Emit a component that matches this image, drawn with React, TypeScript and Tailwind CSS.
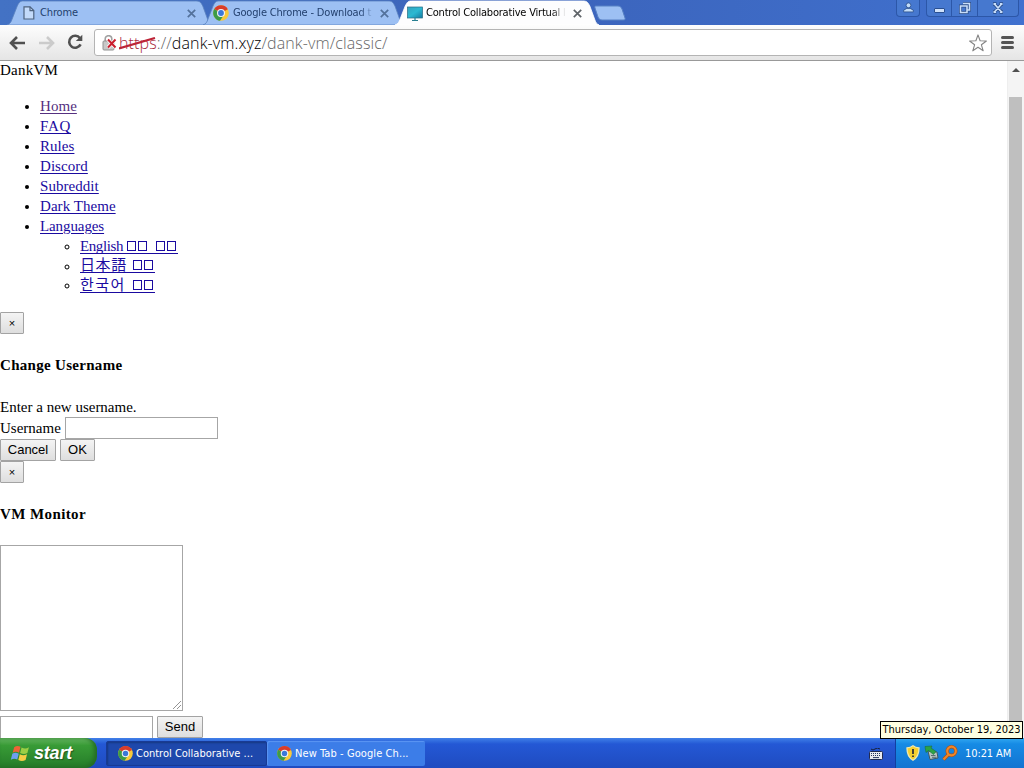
import type { ReactNode } from "react";
import clsx from "clsx";

const links = ["Home", "FAQ", "Rules", "Discord", "Subreddit", "Dark Theme"];

const languages = [
  { name: "English", flags: 2, label: "w-[46px] leading-[21px] tracking-[-0.4px]", row: "h-[20px]", height: "h-[18px]" },
  { name: "日本語", flags: 1, label: "w-[52px] leading-[19px] tracking-[0.6px]", row: "h-[19px]", height: "h-[17px]" },
  { name: "한국어", flags: 1, label: "w-[52px] leading-[20px] tracking-[1.4px]", row: "h-[20px]", height: "h-[18px]" },
];

function ChromeLogo({ className }: { className?: string }) {
  return (
    <svg viewBox="0 0 16 16" className={clsx("shrink-0", className)}>
      <circle cx="8" cy="8" r="7.8" fill="#f9c93a" />
      <path d="M8 8 L1.2 4.1 A7.8 7.8 0 0 1 14.9 4.3 Z" fill="#d93c2c" />
      <path d="M8 8 L1.2 4.1 A7.8 7.8 0 0 0 7 15.75 L11 9.7 Z" fill="#3d9b48" />
      <circle cx="8" cy="8" r="4" fill="#f4f4f4" />
      <circle cx="8" cy="8" r="2.9" fill="#3b78d8" />
    </svg>
  );
}

function PageIcon() {
  return (
    <svg viewBox="0 0 12 14" className="h-3.5 w-3 shrink-0" fill="#c3dafa" stroke="#4e637f" strokeWidth="1.2">
      <path d="M1 0.8 H7 L10.8 4.6 V13 H1 Z" />
      <path d="M7 0.8 V4.6 H10.8" fill="none" />
    </svg>
  );
}

function MonitorIcon() {
  return (
    <svg viewBox="0 0 16 16" className="mt-px h-4 w-4 shrink-0">
      <defs>
        <linearGradient id="screen" x1="0" y1="0" x2="1" y2="1">
          <stop offset="0" stopColor="#35a2bd" />
          <stop offset="0.5" stopColor="#2bb9d2" />
          <stop offset="1" stopColor="#157aa0" />
        </linearGradient>
      </defs>
      <rect x="0.5" y="1" width="15" height="11" fill="url(#screen)" stroke="#286b82" strokeWidth="0.7" />
      <path d="M8 12 V14.5 M5 14.5 H11" stroke="#287f91" strokeWidth="1.2" />
    </svg>
  );
}

function Tab({
  active,
  icon,
  title,
  className,
}: {
  active?: boolean;
  icon: ReactNode;
  title: ReactNode;
  className: string;
}) {
  return (
    <div className={clsx("relative isolate flex h-[25px] shrink-0 items-center pt-px", className)}>
      <svg
        viewBox="0 0 200 25"
        preserveAspectRatio="none"
        className="absolute inset-0 -z-10 h-full w-full"
      >
        <path
          d="M0 25 C3 24 4 22 5 19 L10 6 C12 2 13 1 16 1 H184 C188 1 189 2 191 6 L196 20 C197 23 198 24 200 25 Z"
          fill={active ? "#fdfdfe" : "#9dc0f3"}
          stroke={active ? "#ffffff" : "#5a82bf"}
          strokeWidth="0.8"
        />
      </svg>
      {icon}
      {title}
      <svg viewBox="0 0 9 9" className="ml-auto h-[9px] w-[9px] shrink-0">
        <path
          d="M0.8 0.8 L8.2 8.2 M8.2 0.8 L0.8 8.2"
          stroke={active ? "#5e6368" : "#53719b"}
          strokeWidth="1.7"
        />
      </svg>
    </div>
  );
}

function TabStrip() {
  return (
    <div className="flex h-[25px] items-start bg-linear-to-r from-[#4372c4] via-[#3b63ba] to-[#4071cf] pl-[7px] text-[11px]">
      <Tab
        className="w-[205px] pr-[16px] pl-[16px]"
        icon={<PageIcon />}
        title={<span className="ml-[5px] tracking-[-0.15px] text-[#223f6d]">Chrome</span>}
      />
      <Tab
        className="-ml-[9px] w-[201px] pr-[15px] pl-[10px]"
        icon={<ChromeLogo className="h-4 w-4" />}
        title={
          <span className="ml-[4px] w-[141px] overflow-hidden whitespace-nowrap tracking-[-0.18px] text-[#223f6d] [mask-image:linear-gradient(to_right,black_90%,transparent)]">
            Google Chrome - Download t
          </span>
        }
      />
      <Tab
        active
        className="-ml-[9px] w-[204px] pr-[17px] pl-[12px]"
        icon={<MonitorIcon />}
        title={
          <span className="ml-[3px] w-[140px] overflow-hidden whitespace-nowrap tracking-[-0.2px] text-black [mask-image:linear-gradient(to_right,black_90%,transparent)]">
            Control Collaborative Virtual l
          </span>
        }
      />
      <svg viewBox="0 0 32 16" className="-ml-[5px] mt-[5px] h-4 w-8">
        <path
          d="M2 1 H24 C26 1 27 2 28 4 L31 13 C31.5 14.5 31 15 29 15 H8 C6 15 5 14 4 12 L1 3 C0.5 1.5 1 1 2 1Z"
          fill="#9dc0f3"
          stroke="#5781c4"
        />
      </svg>
      <div className="ml-auto flex h-[17px] gap-[6px] pr-[5px]">
        <div className="flex w-[24px] items-center justify-center rounded-b border border-t-0 border-[#2c57a8] bg-[#4678cf]">
          <svg viewBox="0 0 10 10" className="mb-0.5 h-[11px] w-[11px]" fill="#c2dcf8" stroke="#274b86" strokeWidth="0.7">
            <path d="M0.6 9 V7.4 L3.5 5.8 H6.5 L9.4 7.4 V9Z" />
            <circle cx="5" cy="3" r="2.2" />
          </svg>
        </div>
        <div className="flex w-[93px] rounded-b border border-t-0 border-[#2c57a8] bg-[#4678cf]">
          <div className="flex w-[25px] items-center justify-center border-r border-[#2c57a8]">
            <span className="mt-1 h-[5px] w-[11px] rounded-[1px] border border-[#294f91] bg-[#d0e2fb]" />
          </div>
          <div className="flex w-[26px] items-center justify-center border-r border-[#2c57a8]">
            <svg viewBox="0 0 12 12" className="h-3 w-3" fill="none">
              <path d="M4 1.5 H10.5 V8 H8 M1.5 4 H8 V10.5 H1.5Z" stroke="#284a86" strokeWidth="3" />
              <path d="M4 1.5 H10.5 V8 H8 M1.5 4 H8 V10.5 H1.5Z" stroke="#c8defa" strokeWidth="1.6" />
            </svg>
          </div>
          <div className="flex flex-1 items-center justify-center">
            <svg viewBox="0 0 12 12" className="h-3 w-3">
              <path d="M2.5 2 L9.5 10 M9.5 2 L2.5 10 M1 2 H4.5 M7.5 2 H11 M1 10 H4.5 M7.5 10 H11" stroke="#284a86" strokeWidth="3.4" />
              <path d="M2.5 2 L9.5 10 M9.5 2 L2.5 10 M1.5 2 H4 M8 2 H10.5 M1.5 10 H4 M8 10 H10.5" stroke="#c8defa" strokeWidth="1.8" />
            </svg>
          </div>
        </div>
      </div>
    </div>
  );
}

function Toolbar() {
  return (
    <div className="flex h-9 items-center border-b border-[#999] bg-linear-to-b from-[#fdfdfd] to-[#e5e5e5] pl-[9px]">
      <svg viewBox="0 0 16 14" className="h-[14px] w-4" fill="none" stroke="#505050" strokeWidth="2.6">
        <path d="M16 7 H2 M8 1 L2 7 L8 13" />
      </svg>
      <svg viewBox="0 0 16 14" className="ml-[14px] h-[14px] w-4" fill="none" stroke="#cbcbcb" strokeWidth="2.6">
        <path d="M0 7 H14 M8 1 L14 7 L8 13" />
      </svg>
      <svg viewBox="0 0 16 16" className="mb-px ml-[12px] h-4 w-4" fill="none" stroke="#505050" strokeWidth="2.6">
        <path d="M13 4.2 A6 6 0 1 0 13.6 10.4" />
        <path d="M15.3 0.7 V7 H8.8 Z" fill="#505050" stroke="none" />
      </svg>
      <div className="ml-[11px] flex h-[27px] w-[898px] items-center rounded-[3px] border border-[#b4b4b4] bg-white pr-[4px] pl-[7px]">
        <svg viewBox="0 0 16 16" className="h-4 w-4 shrink-0">
          <path d="M3.2 7 V4 A3.3 3.3 0 0 1 9.8 4 V7" fill="none" stroke="#a1a1a1" strokeWidth="1.6" />
          <rect x="1" y="6" width="11" height="9" rx="1" fill="#c8c8c8" stroke="#929292" />
          <path d="M6 4.5 L13.5 12.5 M13.5 4.5 L6 12.5" stroke="white" strokeWidth="3.5" />
          <path d="M6 4.5 L13.5 12.5 M13.5 4.5 L6 12.5" stroke="#c91d2c" strokeWidth="2" />
        </svg>
        <div className="relative ml-[1px] whitespace-nowrap font-['Open_Sans','Noto_Sans',sans-serif] text-[16px] leading-5 font-light tracking-[0.12px] text-[#666]">
          <span className="text-[#a9293b]">https</span>://
          <span className="text-black">dank-vm.xyz</span>/dank-vm/classic/
          <svg viewBox="0 0 37 14" className="absolute top-[4px] left-0 h-[14px] w-[37px]">
            <path d="M0 11.5 L36 1" stroke="#bd2437" strokeWidth="2.2" />
          </svg>
        </div>
        <svg viewBox="0 0 18 18" className="ml-auto h-[18px] w-[18px]" fill="white" stroke="#848484" strokeWidth="1.1">
          <path d="M9 0.9 L11.1 6.8 L17.4 7 L12.4 10.8 L14.2 16.8 L9 13.3 L3.8 16.8 L5.6 10.8 L0.6 7 L6.9 6.8 Z" strokeLinejoin="round" />
        </svg>
      </div>
      <div className="ml-[9px] flex w-[13px] flex-col gap-[2px]">
        <span className="h-[3px] rounded-sm bg-[#555]" />
        <span className="h-[3px] rounded-sm bg-[#555]" />
        <span className="h-[3px] rounded-sm bg-[#555]" />
      </div>
    </div>
  );
}

// Flag emoji have no glyph here, each one shows as a pair of empty boxes
function MissingGlyphs() {
  return (
    <span className="flex items-end gap-[2px] pr-[2px] pb-[2px] pl-[1px]">
      <span className="h-[10px] w-[9px] border border-current" />
      <span className="h-[10px] w-[9px] border border-current" />
    </span>
  );
}

function PageButton({ children, className }: { children: ReactNode; className: string }) {
  return (
    <button
      type="button"
      className={clsx(
        "block h-[22px] rounded-[1px] border border-[#a3a3a3] bg-linear-to-b from-[#f4f4f4] to-[#dedede] text-center font-['Liberation_Sans',Arial,sans-serif] leading-[20px] whitespace-nowrap text-black",
        className,
      )}
    >
      {children}
    </button>
  );
}

function PageContent() {
  return (
    <main className="min-w-0 flex-1 overflow-hidden font-['Liberation_Serif','Noto_Sans_CJK_JP','Noto_Sans_CJK_KR',serif] text-[15px] leading-5 text-black">
      <div className="h-5 leading-[19px] tracking-[0.25px]">DankVM</div>
      <ul className="mt-[15px] list-disc pl-10 text-[#1a0aa0] marker:text-black">
        {links.map((link) => (
          <li key={link} className="h-5 tracking-[0.05px]">
            <a
              className={clsx(
                "underline underline-offset-2",
                link === "Home" && "text-[#553080]",
                link === "FAQ" && "tracking-[0.7px]",
              )}
            >
              {link}
            </a>
          </li>
        ))}
        <li>
          <a className="underline underline-offset-2 tracking-[-0.1px]">Languages</a>
          <ul className="list-[circle] pl-10">
            {languages.map((language) => (
              <li key={language.name} className={clsx("whitespace-nowrap", language.row)}>
                <a className={clsx("inline-flex border-b border-current align-top", language.height)}>
                  <span className={language.label}>{language.name}</span>
                  <MissingGlyphs />
                  {language.flags > 1 && (
                    <span className="ml-[6px] flex">
                      <MissingGlyphs />
                    </span>
                  )}
                </a>
              </li>
            ))}
          </ul>
        </li>
      </ul>
      <PageButton className="mt-[17px] w-6 text-[11px]">×</PageButton>
      <h4 className="mt-[21px] font-bold tracking-[0.3px]">Change Username</h4>
      <p className="mt-[22px]">Enter a new username.</p>
      <div className="flex h-[22px] items-center">
        <label className="w-[65px]">Username</label>
        <input className="h-[22px] w-[153px] border border-[#a6a6a6] bg-white" />
      </div>
      <div className="flex gap-1">
        <PageButton className="w-14 text-[13px]">Cancel</PageButton>
        <PageButton className="w-[35px] text-[13px]">OK</PageButton>
      </div>
      <PageButton className="w-6 text-[11px]">×</PageButton>
      <h4 className="mt-[21px] font-bold tracking-[0.4px]">VM Monitor</h4>
      <div className="mt-[21px] flex h-[166px] w-[183px] items-end justify-end border border-[#a6a6a6] p-[1px]">
        <svg viewBox="0 0 8 8" className="h-2 w-2" stroke="#777" strokeWidth="0.8">
          <path d="M0 8 L8 0 M4 8 L8 4" />
        </svg>
      </div>
      <div className="mt-[5px] flex gap-1">
        <input className="h-[23px] w-[153px] border border-[#a6a6a6] bg-white" />
        <PageButton className="w-[46px] text-[13px]">Send</PageButton>
      </div>
    </main>
  );
}

function Scrollbar() {
  return (
    <div className="flex w-[17px] shrink-0 flex-col items-center border-l border-[#eee] bg-[#f4f4f4]">
      <svg viewBox="0 0 8 4" className="mt-[7px] h-1 w-2">
        <path d="M0 4 L4 0 L8 4Z" fill="#505050" />
      </svg>
      <div className="mt-[25px] mr-px w-[13px] flex-1 bg-[#bfbfbf]" />
    </div>
  );
}

function Taskbar() {
  return (
    <footer className="flex h-[30px] shrink-0 bg-linear-to-b from-[#4180e8] via-[#2458d5] via-20% to-[#1f4bc0] text-[11px] text-white">
      <div className="flex w-[97px] items-center rounded-r-xl bg-linear-to-b from-[#62b35e] via-[#389b36] via-25% to-[#257c29] pl-[10px] shadow-[inset_-3px_-1px_4px_#246c25]">
        <svg viewBox="0 0 19 18" className="h-[19px] w-5">
          <path d="M4 3 C6 1.5 8 1.5 10 2.7 L8.6 8.2 C6.5 7 4.5 7 2.5 8.3Z" fill="#ee6337" />
          <path d="M11 3.2 C13.5 4.5 15.5 4.5 18 3 L16.5 8.6 C14 10 12 9.7 9.6 8.5Z" fill="#9cce45" />
          <path d="M2.2 9.3 C4.4 8 6.2 8.2 8.3 9.3 L6.9 14.8 C5 13.7 3 13.7 0.8 15Z" fill="#6e9ff0" />
          <path d="M9.3 9.8 C11.8 11 13.6 11 16.2 9.7 L14.8 15.2 C12.3 16.6 10.2 16.5 7.9 15.2Z" fill="#f5cc45" />
        </svg>
        <span className="ml-[4px] font-['Liberation_Sans',sans-serif] text-[18px] leading-5 font-bold tracking-[-0.2px] italic [text-shadow:1px_1px_1px_#24551f]">
          start
        </span>
      </div>
      <div className="mt-[3px] ml-[9px] flex h-[25px] w-[161px] items-center rounded-[2px] border border-[#183a95] bg-[#1e48ac] pl-[11px] shadow-[inset_1px_1px_2px_#163882]">
        <ChromeLogo className="h-[15px] w-[15px]" />
        <span className="ml-[3px] whitespace-nowrap">Control Collaborative ...</span>
      </div>
      <div className="mt-[3px] flex h-[25px] w-[158px] items-center rounded-[2px] bg-[#3c7de8] pl-[10px] shadow-[inset_1px_1px_1px_#5b96f3]">
        <ChromeLogo className="h-[15px] w-[15px]" />
        <span className="ml-[3px] whitespace-nowrap tracking-[0.08px]">New Tab - Google Ch...</span>
      </div>
      <svg viewBox="0 0 14 12" className="mt-[10px] ml-auto h-3 w-[14px]">
        <path d="M2 1 Q4 3 6 1 T11 1" fill="none" stroke="#19213a" />
        <rect x="0.5" y="3.5" width="13" height="8" rx="1" fill="#e8eaf0" stroke="#202b52" />
        <path d="M2 5.5 H12 M2 7.5 H12" stroke="#27365d" strokeDasharray="1 1" />
        <path d="M4 9.6 H10" stroke="#27365d" />
      </svg>
      <div className="ml-[12px] flex w-[129px] items-center border-l border-[#123fa0] bg-linear-to-b from-[#31a8f1] via-[#168be5] via-20% to-[#1374d1] pl-[10px]">
        <svg viewBox="0 0 14 16" className="h-4 w-[14px]">
          <path d="M7 0.8 C9 2.4 11 2.8 13 2.8 C13.2 9 11.5 12.5 7 15.2 C2.5 12.5 0.8 9 1 2.8 C3 2.8 5 2.4 7 0.8Z" fill="#f6d02e" stroke="#eee7ae" strokeWidth="1.3" />
          <path d="M7 4 V9 M7 10.5 V12" stroke="#333" strokeWidth="1.8" />
        </svg>
        <svg viewBox="0 0 16 16" className="ml-[4px] h-4 w-4">
          <path d="M4 6 L13 7 L14 13 L6 14.5Z" fill="#b9c6c2" stroke="#3f5862" />
          <path d="M1 1.5 L8 1 L7 3 L12 6.5 L9.5 9.5 L4.5 5.5 L2 7.5Z" fill="#2ca345" stroke="#1d713a" strokeWidth="0.6" />
          <path d="M7 10.5 H11.5 M8 12.3 H12.5" stroke="#596d72" />
        </svg>
        <svg viewBox="0 0 16 16" className="ml-[2px] h-4 w-4" fill="none">
          <path d="M6.5 9.5 L1.5 14.5" stroke="#a95018" strokeWidth="3.6" />
          <circle cx="9.5" cy="6" r="4.3" stroke="#a95018" strokeWidth="3.4" />
          <path d="M6.5 9.5 L1.5 14.5" stroke="#ef8629" strokeWidth="2.2" />
          <circle cx="9.5" cy="6" r="4.3" stroke="#ef8629" strokeWidth="2.2" />
        </svg>
        <span className="mt-px ml-[7px] whitespace-nowrap tracking-[-0.1px]">10:21 AM</span>
      </div>
    </footer>
  );
}

export default function App() {
  return (
    <div className="relative flex h-[768px] w-[1024px] flex-col overflow-hidden bg-white font-['DejaVu_Sans_Condensed','DejaVu_Sans',sans-serif] leading-4">
      <TabStrip />
      <Toolbar />
      <div className="flex min-h-0 flex-1">
        <PageContent />
        <Scrollbar />
      </div>
      <Taskbar />
      <div className="absolute top-[721px] right-[1px] flex h-[18px] w-[143px] items-center justify-center border border-black bg-[#ffffe1] text-[11px] tracking-[-0.05px] whitespace-nowrap text-black">
        Thursday, October 19, 2023
      </div>
    </div>
  );
}
